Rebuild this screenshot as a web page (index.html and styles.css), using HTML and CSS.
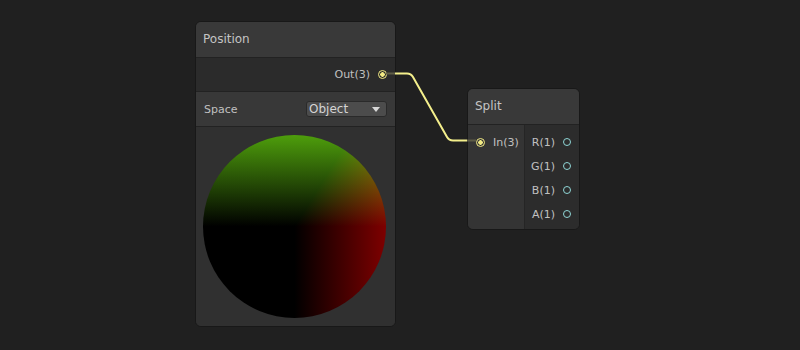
FILE: index.html
```html
<!DOCTYPE html>
<html lang="en">
<head>
    <meta charset="UTF-8">
    <title>Shader Graph</title>
    <link rel="stylesheet" href="styles.css">
</head>
<body>
    <div class="graph">
        <svg class="wires" width="800" height="350" viewBox="0 0 800 350">
            <line x1="386" y1="73.5" x2="395" y2="73.5" class="stub"/>
            <line x1="467" y1="140.5" x2="476" y2="140.5" class="stub"/>
            <path d="M395 73.5 H407 Q411 73.5 413 77 L447 137 Q449 140.5 453 140.5 H467" class="wire"/>
        </svg>

        <div class="node node-position">
            <div class="node-title">Position</div>
            <div class="row row-out">
                <span class="label">Out(3)</span>
                <span class="port port-vec3 connected"></span>
            </div>
            <div class="row row-control">
                <span class="label">Space</span>
                <div class="dropdown">
                    <span>Object</span>
                    <span class="caret"></span>
                </div>
            </div>
            <div class="preview">
                <div class="sphere"></div>
            </div>
        </div>

        <div class="node node-split">
            <div class="node-title">Split</div>
            <div class="split-body">
                <div class="inputs">
                    <div class="slot slot-in">
                        <span class="port port-vec3 connected"></span>
                        <span class="label">In(3)</span>
                    </div>
                </div>
                <div class="outputs">
                    <div class="slot slot-out"><span class="label">R(1)</span><span class="port port-float"></span></div>
                    <div class="slot slot-out"><span class="label">G(1)</span><span class="port port-float"></span></div>
                    <div class="slot slot-out"><span class="label">B(1)</span><span class="port port-float"></span></div>
                    <div class="slot slot-out"><span class="label">A(1)</span><span class="port port-float"></span></div>
                </div>
            </div>
        </div>
    </div>
</body>
</html>
```

FILE: styles.css
```css
body {
    margin: 0;
    background: #202020;
    font-family: 'DejaVu Sans', Verdana, sans-serif;
    font-size: 11px;
    color: #c0c0c0;
}

.graph {
    position: relative;
    width: 800px;
    height: 350px;
    overflow: hidden;
}

.wires {
    position: absolute;
    left: 0;
    top: 0;
    z-index: 2;
    pointer-events: none;
}

.wire {
    fill: none;
    stroke: #f4ef8c;
    stroke-width: 2;
}

.stub {
    stroke: #5e5d47;
    stroke-width: 2;
}

/* nodes sit on a free canvas */
.node {
    position: absolute;
    box-sizing: border-box;
    display: flex;
    flex-direction: column;
    background: #2f2f2f;
    border: 1px solid #181818;
    border-radius: 6px;
    overflow: hidden;
}

.node-position {
    left: 195px;
    top: 21px;
    width: 201px;
    height: 306px;
}

.node-split {
    left: 467px;
    top: 88px;
    width: 113px;
    height: 142px;
}

.node-title {
    box-sizing: border-box;
    height: 36px;
    flex: none;
    display: flex;
    align-items: center;
    padding: 0 7px 2px;
    background: #393939;
    border-bottom: 1px solid #222;
    color: #c4c4c4;
    font-size: 12px;
}

.row {
    box-sizing: border-box;
    flex: none;
    display: flex;
    align-items: center;
    border-bottom: 1px solid #222;
}

.row-out {
    height: 34px;
    justify-content: flex-end;
    gap: 8px;
    padding: 0 8px 0 0;
    background: #2b2b2b;
}

.row-control {
    height: 35px;
    justify-content: space-between;
    padding: 0 8px 0 8px;
    background: #383838;
}

.dropdown {
    box-sizing: border-box;
    width: 81px;
    height: 16px;
    display: flex;
    align-items: center;
    justify-content: space-between;
    padding: 0 6px 0 2px;
    background: #4c4c4c;
    border: 1px solid #2a2a2a;
    border-radius: 3px;
    color: #d4d4d4;
    font-size: 12px;
}

.caret {
    width: 0;
    height: 0;
    border-left: 4px solid transparent;
    border-right: 4px solid transparent;
    border-top: 5px solid #d8d8d8;
}

.preview {
    flex: 1;
    display: flex;
    align-items: center;
    justify-content: center;
    background: #303030;
}

.sphere {
    width: 183px;
    height: 183px;
    border-radius: 50%;
    background-color: #000;
    background-image:
        linear-gradient(to right, #000 50%, #7e0000 100%),
        linear-gradient(to bottom, #4e9e0c 0%, #000 50%);
    background-blend-mode: lighten;
    transform: translateX(-1px);
}

.port {
    box-sizing: border-box;
    width: 9px;
    height: 9px;
    border-radius: 50%;
    flex: none;
}

.port-vec3 {
    border: 1.5px solid #f2ea84;
}

.port-vec3.connected {
    background: radial-gradient(circle, #f2ea84 0 2px, transparent 2.5px);
}

.port-float {
    width: 8px;
    height: 8px;
    border: 1.5px solid #8fd6d6;
}

.split-body {
    flex: 1;
    display: flex;
}

.inputs {
    box-sizing: border-box;
    width: 57px;
    padding: 5px 0 0 8px;
    background: #343434;
    border-right: 1px solid #252525;
}

.outputs {
    flex: 1;
    padding: 5px 8px 0 0;
    background: #2c2c2c;
}

.slot {
    height: 24px;
    display: flex;
    align-items: center;
}

.slot-in {
    gap: 8px;
}

.slot-out {
    justify-content: flex-end;
    gap: 8px;
}
```
